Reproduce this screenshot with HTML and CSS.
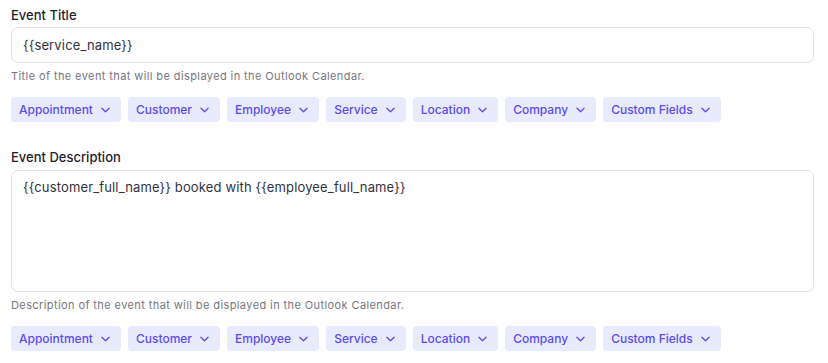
FILE: index.html
```html
<!DOCTYPE html>
<html>
<head>
<meta charset="utf-8">
<link rel="stylesheet" href="styles.css">
</head>
<body>
<div class="form">
  <div class="field">
    <div class="label">Event Title</div>
    <div class="input">{{service_name}}</div>
    <div class="help">Title of the event that will be displayed in the Outlook Calendar.</div>
    <div class="tags">
      <div class="tag">Appointment<svg viewBox="0 0 10 6"><path d="M1 1l4 4 4-4"/></svg></div>
      <div class="tag">Customer<svg viewBox="0 0 10 6"><path d="M1 1l4 4 4-4"/></svg></div>
      <div class="tag">Employee<svg viewBox="0 0 10 6"><path d="M1 1l4 4 4-4"/></svg></div>
      <div class="tag">Service<svg viewBox="0 0 10 6"><path d="M1 1l4 4 4-4"/></svg></div>
      <div class="tag">Location<svg viewBox="0 0 10 6"><path d="M1 1l4 4 4-4"/></svg></div>
      <div class="tag">Company<svg viewBox="0 0 10 6"><path d="M1 1l4 4 4-4"/></svg></div>
      <div class="tag">Custom Fields<svg viewBox="0 0 10 6"><path d="M1 1l4 4 4-4"/></svg></div>
    </div>
  </div>
  <div class="field second">
    <div class="label">Event Description</div>
    <div class="textarea">{{customer_full_name}} booked with {{employee_full_name}}</div>
    <div class="help">Description of the event that will be displayed in the Outlook Calendar.</div>
    <div class="tags">
      <div class="tag">Appointment<svg viewBox="0 0 10 6"><path d="M1 1l4 4 4-4"/></svg></div>
      <div class="tag">Customer<svg viewBox="0 0 10 6"><path d="M1 1l4 4 4-4"/></svg></div>
      <div class="tag">Employee<svg viewBox="0 0 10 6"><path d="M1 1l4 4 4-4"/></svg></div>
      <div class="tag">Service<svg viewBox="0 0 10 6"><path d="M1 1l4 4 4-4"/></svg></div>
      <div class="tag">Location<svg viewBox="0 0 10 6"><path d="M1 1l4 4 4-4"/></svg></div>
      <div class="tag">Company<svg viewBox="0 0 10 6"><path d="M1 1l4 4 4-4"/></svg></div>
      <div class="tag">Custom Fields<svg viewBox="0 0 10 6"><path d="M1 1l4 4 4-4"/></svg></div>
    </div>
  </div>
</div>
</body>
</html>
```
FILE: styles.css
```css
html, body {
  margin: 0;
  padding: 0;
  background: #ffffff;
}
body {
  font-family: Inter, "Noto Sans", sans-serif;
}
.form {
  padding: 6px 14px 0 11px;
  width: 803px;
}
.field.second {
  margin-top: 26px;
}
.label {
  font-size: 13px;
  line-height: 18px;
  font-weight: 500;
  color: #1d1d2b;
  margin-bottom: 3px;
}
.second .label {
  margin-bottom: 4px;
}
.input, .textarea {
  box-sizing: border-box;
  border: 1px solid #e3e3e6;
  border-radius: 7px;
  font-size: 13px;
  letter-spacing: 0.15px;
  color: #33333f;
  padding: 0 11px;
}
.input {
  height: 36px;
  line-height: 34px;
}
.textarea {
  height: 122px;
  padding-top: 7px;
  line-height: 18px;
}
.help {
  margin-top: 5px;
  font-size: 11px;
  letter-spacing: 0.4px;
  line-height: 16px;
  color: #76767f;
}
.tags {
  margin-top: 13px;
  display: flex;
  gap: 7px;
}
.tag {
  height: 25px;
  box-sizing: border-box;
  display: flex;
  align-items: center;
  gap: 8px;
  padding: 0 11px 0 8px;
  background: #e8ebfd;
  border-radius: 4px;
  color: #5b4cf0;
  font-size: 12px;
  font-weight: 500;
}
.tag svg {
  width: 9px;
  height: 6px;
  fill: none;
  stroke: #5b4cf0;
  stroke-width: 1.4;
  stroke-linecap: round;
  stroke-linejoin: round;
}
```
